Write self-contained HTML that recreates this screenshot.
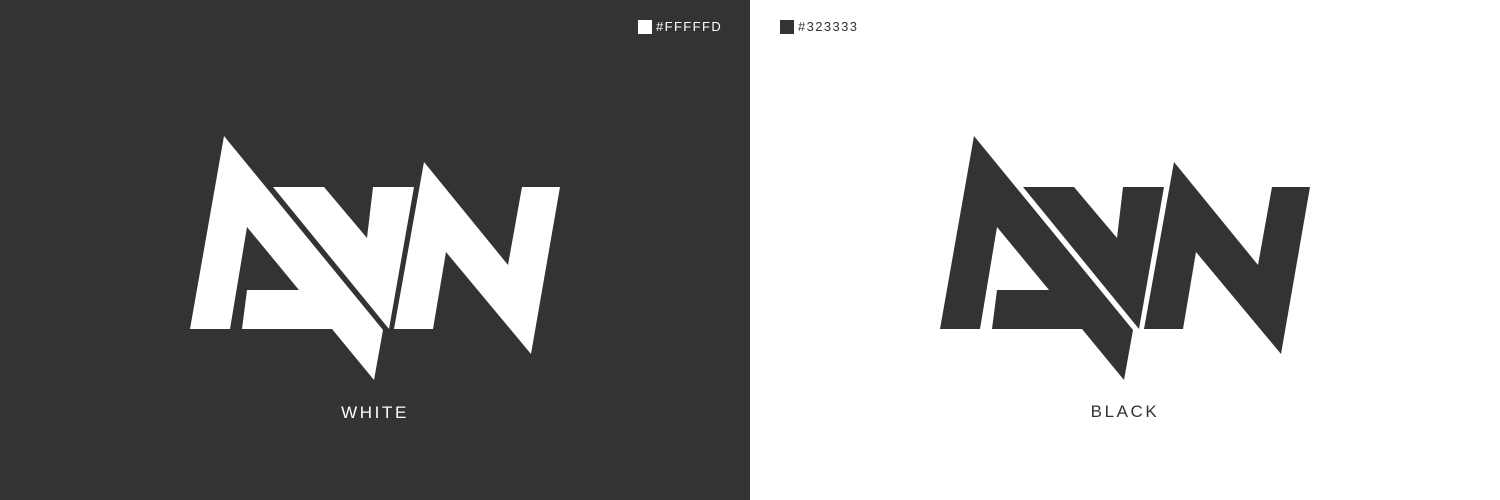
<!DOCTYPE html>
<html><head><style>
body{margin:0;width:1500px;height:500px;position:relative;font-family:"Liberation Sans",sans-serif;overflow:hidden;background:#fffffd}
.l{position:absolute;left:0;top:0;width:750px;height:500px;background:#323333}
.sw{position:absolute;top:20px;width:14px;height:14px}
.t{position:absolute;font-size:13px;letter-spacing:1.4px;top:19px}
.lab{position:absolute;width:200px;text-align:center;font-size:17px;letter-spacing:2.6px;top:403px}
</style></head><body>
<div class="l"></div>
<div class="sw" style="left:638px;background:#fffffd"></div>
<div class="t" style="left:656px;color:#fffffd">#FFFFFD</div>
<div class="sw" style="left:780px;background:#323333"></div>
<div class="t" style="left:798px;color:#323333">#323333</div>
<svg width="1500" height="500" style="position:absolute;left:0;top:0">
<defs><g id="logo">
<polygon points="224,136 383,330 374,380 332,329 242,329 247,290 299,290 247,227 230,329 190,329"/>
<polygon points="273,187 324,187 367,238 373,187 414,187 389,329"/>
<polygon points="394,329 424,162 508,265 522,187 560,187 531,354 446,252 433,329"/>
</g></defs>
<use href="#logo" fill="#fffffd"/>
<use href="#logo" fill="#323333" transform="translate(750,0)"/>
</svg>
<div class="lab" style="left:275px;color:#fffffd">WHITE</div>
<div class="lab" style="left:1025px;top:402px;color:#323333">BLACK</div>
</body></html>
